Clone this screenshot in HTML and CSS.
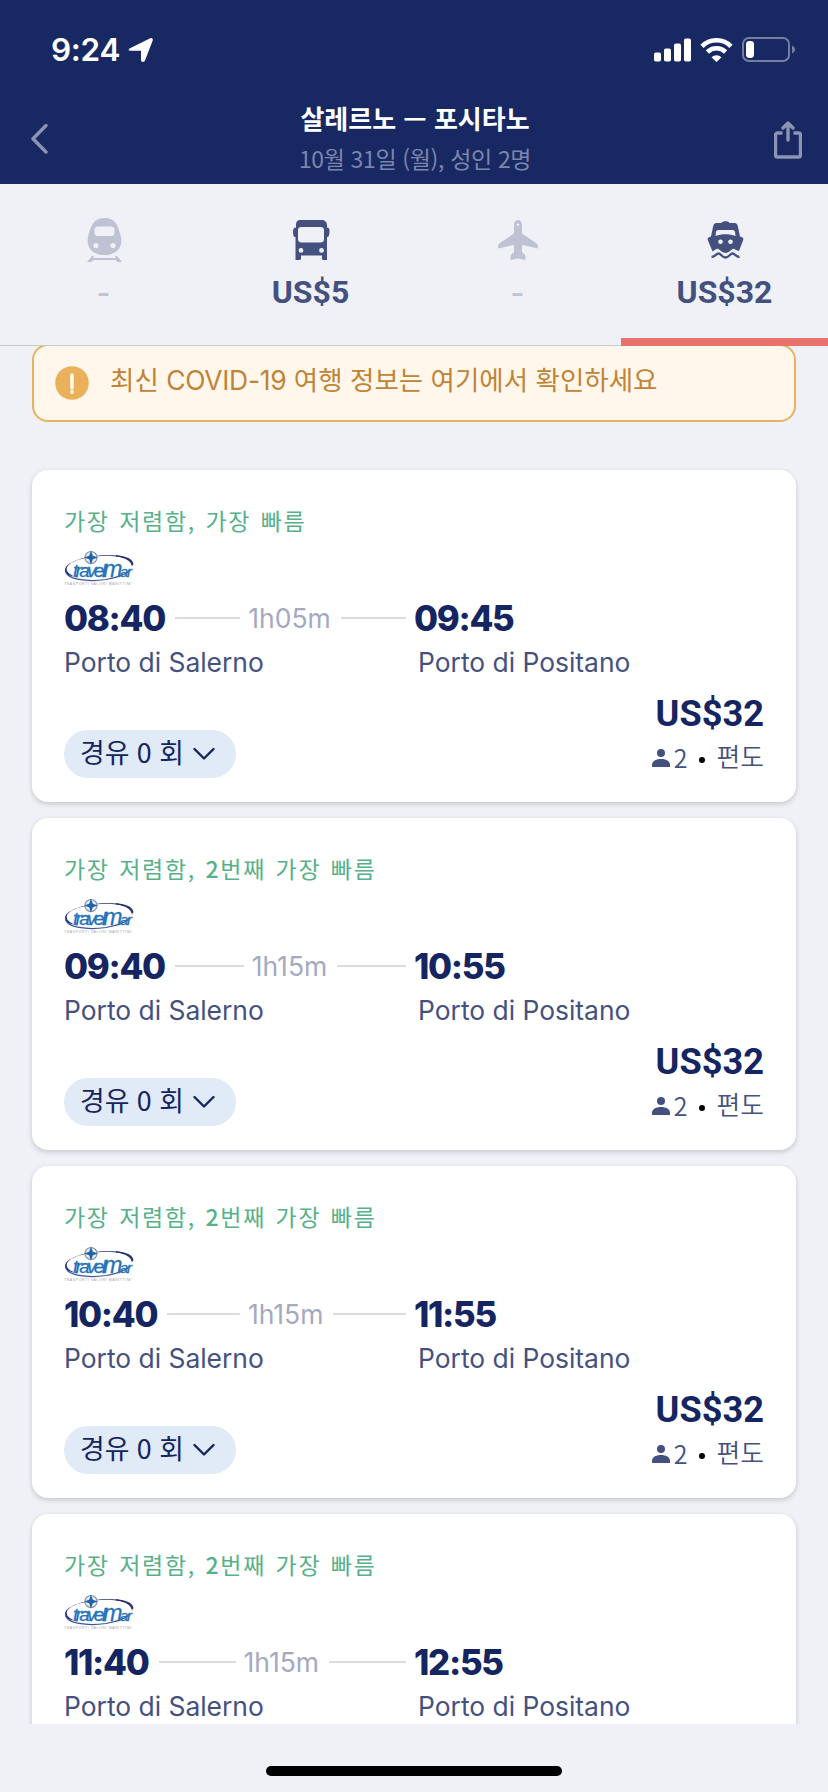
FILE: index.html
```html
<!DOCTYPE html>
<html lang="ko">
<head>
<meta charset="utf-8">
<title>살레르노 — 포시타노</title>
<link rel="stylesheet" href="styles.css">
</head>
<body>
<svg class="defs" aria-hidden="true">
  <symbol id="logo" viewBox="0 0 72 36">
    <path d="M12 27C-3 22 0 12 22 8C44 3 68 6 68 17C71 10 60 4.500 42 5C18 6 1 13 1 20C1 24 5 26 12 27Z" fill="#2a3479"/>
    <path d="M1.500 20C1.500 30 24 32 42 29.500C54 27.500 62 24 66 20" fill="none" stroke="#3b5596" stroke-width="1.200"/>
    <path d="M52 5.800C62 7 69 10 68.500 15" fill="none" stroke="#252f70" stroke-width="1.600"/>
    <circle cx="27" cy="7.500" r="6" fill="#e9edf5" stroke="#8b93ad" stroke-width="1.200"/>
    <path d="M27 .5l1.800 5.200 5.200 1.800-5.200 1.800L27 15l-1.800-5.700-5.200-1.800 5.200-1.800z" fill="#1e63a8"/>
  </symbol>
  <symbol id="person" viewBox="0 0 18 18">
    <circle cx="9" cy="4" r="4"/><path d="M0 18v-2c0-4 4-6 9-6s9 2 9 6v2z"/>
  </symbol>
  <symbol id="chev" viewBox="0 0 22 14">
    <path d="M1.500 2L11 11.500 20.500 2" fill="none" stroke="#152561" stroke-width="2.400" stroke-linecap="round" stroke-linejoin="round"/>
  </symbol>
</svg>
<div class="screen">
  <header class="header">
    <div class="status">
      <div class="clock"><span>9:24</span>
        <svg width="26" height="26" viewBox="0 0 26 26"><path d="M2 11.300L22.200 1.200c1.700-.8 3.100.6 2.500 2.200L17 23.500c-.9 2.200-4 1.800-4-.5V13.800H2.900c-2.500 0-3-1.600-.9-2.500z" fill="#fff"/></svg>
      </div>
      <div class="indicators">
        <svg width="37" height="24" viewBox="0 0 37 24" fill="#fff"><rect y="14.500" width="7" height="9" rx="1.800"/><rect x="10" y="10.500" width="7" height="13" rx="1.800"/><rect x="20" y="5.500" width="7" height="18" rx="1.800"/><rect x="30" y=".5" width="7" height="23" rx="1.800"/></svg>
        <svg width="33" height="24" viewBox="0 0 33 24"><g fill="none" stroke="#fff" stroke-width="4.600"><path d="M2 8.300a20.500 20.500 0 0 1 29 0"/><path d="M7.400 14a13 13 0 0 1 18.200 0"/></g><path d="M11.500 19.300a7.400 7.400 0 0 1 10 0L16.500 24z" fill="#fff"/></svg>
        <svg width="54" height="26" viewBox="0 0 54 26"><rect x="1" y="1" width="46" height="23" rx="6" fill="none" stroke="#747ea3" stroke-width="2"/><rect x="4" y="4" width="8" height="17" rx="3.400" fill="#fff"/><path d="M50 8.500c4 1.500 4 6.500 0 8z" fill="#747ea3"/></svg>
      </div>
    </div>
    <div class="nav">
      <svg width="18" height="32" viewBox="0 0 18 32"><path d="M16 2.500L3 15.800 16 29" fill="none" stroke="#8b94b2" stroke-width="3.400" stroke-linecap="round" stroke-linejoin="round"/></svg>
      <div class="heading"><h1>살레르노 — 포시타노</h1><p>10월 31일 (월), 성인 2명</p></div>
      <svg class="share" width="28" height="38" viewBox="0 0 28 38" fill="none" stroke="#8b94b2" stroke-width="3.400" stroke-linecap="round" stroke-linejoin="round"><path d="M8.500 12H3.500a2 2 0 0 0-2 2v20a2 2 0 0 0 2 2h21a2 2 0 0 0 2-2V14a2 2 0 0 0-2-2h-5" stroke-linecap="butt"/><path d="M14 19V3M9 7L14 2l5 5"/></svg>
    </div>
  </header>
  <nav class="tabs">
    <div class="tab off">
      <svg viewBox="0 0 44 44"><path fill-rule="evenodd" d="M22.500 0C12 0 9 7 6.300 18C3.500 29 10 37 22.500 37S41.500 29 38.700 18C36 7 33 0 22.500 0zM16 8.500h13a3.500 3.500 0 0 1 3.500 3.500v2.500a3.500 3.500 0 0 1-3.500 3.500H16a3.500 3.500 0 0 1-3.500-3.500V12A3.500 3.500 0 0 1 16 8.500zM14 25a2.600 2.600 0 1 1 0 5.200a2.600 2.600 0 0 1 0-5.200zm17 0a2.600 2.600 0 1 1 0 5.200a2.600 2.600 0 0 1 0-5.200z"/><path d="M12 38l-1 2h23l-1-2h2l5 6h-4.500l-2-2H11.500l-2 2H5l5-6z"/></svg>
      <span class="dash">-</span>
    </div>
    <div class="tab">
      <svg viewBox="0 0 44 44"><path fill-rule="evenodd" d="M11 2h22c3 0 5 2.500 5 5v2.500c3 0 2.700 3 2.300 6.500-.2 2.500-1.300 3-2.300 3V42h-3.500c-1 0-1.500-.6-1.500-1.500V37.500H12v3c0 .9-.5 1.500-1.500 1.500H6.500V19c-1 0-2.200-.5-2.300-3C3.800 12.500 4 9.500 7 9.500L7 7c0-2.500 1-5 4-5zM12.500 9C10 9 9 10 9 12v9c0 2 1 3.500 3.500 3.500h19c2.500 0 3.500-1.500 3.500-3.500v-9c0-2-1-3-3.500-3zM12 30a2.400 2.400 0 1 0 0 4.800a2.400 2.400 0 0 0 0-4.800zm20.500 0a2.400 2.400 0 1 0 0 4.800a2.400 2.400 0 0 0 0-4.800z"/></svg>
      <span class="fare">US$5</span>
    </div>
    <div class="tab off">
      <svg viewBox="0 0 44 44"><path fill-rule="evenodd" d="M22 2c2.500 0 4 2 4 5v8.500L40 25c1.500 1 2 2 2 5.500l-15-3.500c-1 0-1 .5-1 2v5c0 1 3.500 2 3.500 4.500V42c-2-.3-4.500-1.500-7.500-1.500s-5.500 1.200-7.500 1.500v-3.500c0-2.500 3.500-3.500 3.500-4.500v-5c0-1.500 0-2-1-2L2 30.500C2 27 2.500 26 4 25l14-9.500V7c0-3 1.500-5 4-5zm0 3.500c-1 0-1.600.8-1.600 2h3.200c0-1.200-.6-2-1.600-2z"/></svg>
      <span class="dash">-</span>
    </div>
    <div class="tab active">
      <svg viewBox="0 0 44 44"><path fill-rule="evenodd" d="M18.500 5c1-2.500 7-2.500 8 0h5c2 0 3 1.500 3.400 3.500L37 18.500l2.500 1c1 .5 1 1.500.5 3l-4 10.500C33 33 31 30 29.500 31c-2 1.200-4 4-7 4s-5-2.800-7-4c-1.500-1-3.500 1-6 2.500L5 22.500c-.5-1.500-.5-2.500.5-3l2.500-1 2.100-10C10.500 6.500 11.500 5 13.500 5zM15.500 12c-1.700 0-2.200.7-2.500 2l-.5 4c6-2.300 14-2.300 20 0L32 14c-.3-1.300-.8-2-2.500-2zM17.500 21.500a2.300 2.300 0 1 0 0 4.600a2.300 2.300 0 0 0 0-4.600zm10 0a2.300 2.300 0 1 0 0 4.600a2.300 2.300 0 0 0 0-4.600z"/><path d="M8.500 39c4 0 4.500-3.500 7-3.500s3.500 4 7 4 4.500-4 7-4 3 3.500 7 3.500" fill="none" stroke="#44517f" stroke-width="2.300"/></svg>
      <span class="fare">US$32</span>
    </div>
  </nav>
  <main class="list">
    <div class="notice">
      <svg width="34" height="34" viewBox="0 0 34 34"><circle cx="17" cy="17" r="16.800" fill="#ebb15a"/><path d="M17 9v13" stroke="#fff7ea" stroke-width="3.600" stroke-linecap="round"/><circle cx="17" cy="26" r="1.900" fill="#fff7ea"/></svg>
      <span>최신 <b>COVID-19</b> 여행 정보는 여기에서 확인하세요</span>
    </div>
    <article class="card">
      <div class="label">가장 저렴함, 가장 빠름</div>
      <svg class="logo" viewBox="0 0 72 36"><use href="#logo"/><text x="9" y="26.500" class="logo-name">travel<tspan class="logo-m">m</tspan><tspan class="logo-ar">ar</tspan></text><text x="0" y="35" class="logo-tag">TRASPORTI VALORI MARITTIMI</text></svg>
      <div class="route"><div class="leg"><span class="time">08:40</span><i></i><span class="dur">1h05m</span><i></i></div><span class="time">09:45</span></div>
      <div class="ports"><span>Porto di Salerno</span><span>Porto di Positano</span></div>
      <div class="foot"><div class="pill"><span>경유 0 회</span><svg width="22" height="14"><use href="#chev"/></svg></div>
        <div class="price"><strong>US$32</strong><div class="pax"><svg width="18" height="18"><use href="#person"/></svg><span class="count">2</span><i></i><span>편도</span></div></div></div>
    </article>
    <article class="card">
      <div class="label">가장 저렴함, <b>2</b>번째 가장 빠름</div>
      <svg class="logo" viewBox="0 0 72 36"><use href="#logo"/><text x="9" y="26.500" class="logo-name">travel<tspan class="logo-m">m</tspan><tspan class="logo-ar">ar</tspan></text><text x="0" y="35" class="logo-tag">TRASPORTI VALORI MARITTIMI</text></svg>
      <div class="route"><div class="leg"><span class="time">09:40</span><i></i><span class="dur">1h15m</span><i></i></div><span class="time">10:55</span></div>
      <div class="ports"><span>Porto di Salerno</span><span>Porto di Positano</span></div>
      <div class="foot"><div class="pill"><span>경유 0 회</span><svg width="22" height="14"><use href="#chev"/></svg></div>
        <div class="price"><strong>US$32</strong><div class="pax"><svg width="18" height="18"><use href="#person"/></svg><span class="count">2</span><i></i><span>편도</span></div></div></div>
    </article>
    <article class="card">
      <div class="label">가장 저렴함, <b>2</b>번째 가장 빠름</div>
      <svg class="logo" viewBox="0 0 72 36"><use href="#logo"/><text x="9" y="26.500" class="logo-name">travel<tspan class="logo-m">m</tspan><tspan class="logo-ar">ar</tspan></text><text x="0" y="35" class="logo-tag">TRASPORTI VALORI MARITTIMI</text></svg>
      <div class="route"><div class="leg"><span class="time">10:40</span><i></i><span class="dur">1h15m</span><i></i></div><span class="time">11:55</span></div>
      <div class="ports"><span>Porto di Salerno</span><span>Porto di Positano</span></div>
      <div class="foot"><div class="pill"><span>경유 0 회</span><svg width="22" height="14"><use href="#chev"/></svg></div>
        <div class="price"><strong>US$32</strong><div class="pax"><svg width="18" height="18"><use href="#person"/></svg><span class="count">2</span><i></i><span>편도</span></div></div></div>
    </article>
    <article class="card">
      <div class="label">가장 저렴함, <b>2</b>번째 가장 빠름</div>
      <svg class="logo" viewBox="0 0 72 36"><use href="#logo"/><text x="9" y="26.500" class="logo-name">travel<tspan class="logo-m">m</tspan><tspan class="logo-ar">ar</tspan></text><text x="0" y="35" class="logo-tag">TRASPORTI VALORI MARITTIMI</text></svg>
      <div class="route"><div class="leg"><span class="time">11:40</span><i></i><span class="dur">1h15m</span><i></i></div><span class="time">12:55</span></div>
      <div class="ports"><span>Porto di Salerno</span><span>Porto di Positano</span></div>
    </article>
  </main>
  <footer class="home"><div class="home-bar"></div></footer>
</div>
</body>
</html>
```
FILE: styles.css
```css
* { box-sizing: border-box; margin: 0; padding: 0; }
body { background: #f0f1f6; font-family: Inter, "Noto Sans CJK KR", sans-serif; white-space: nowrap; }
svg { display: block; flex: none; }
.defs { position: absolute; width: 0; height: 0; }
.screen { width: 828px; height: 1792px; display: flex; flex-direction: column; overflow: hidden; }

.header { height: 184px; flex: none; background: #182863; color: #fff; }
.status { height: 94px; padding: 5px 32px 0 51px; display: flex; align-items: center; justify-content: space-between; }
.clock { display: flex; align-items: center; gap: 8px; font-size: 31.500px; letter-spacing: -.3px; font-weight: 600; line-height: 40px; }
.indicators { display: flex; align-items: center; gap: 9px; }
.nav { height: 90px; padding: 0 26px 0 30px; display: flex; justify-content: space-between; }
.nav > svg { margin-top: 29px; }
.nav > svg:first-child { margin-right: 8px; }
.nav > .share { margin-top: 27px; }
.heading { text-align: center; padding-top: 7px; font-family: "Noto Sans CJK KR", sans-serif; }
.heading h1 { font-size: 26px; line-height: 34px; font-weight: 700; }
.heading p { font-size: 23px; line-height: 34px; padding-top: 6px; color: #7c86ab; font-weight: 400; letter-spacing: -.35px; }

.tabs { height: 162px; flex: none; display: flex; border-bottom: 1px solid #c9cace; position: relative; }
.tab { flex: 1; padding-top: 34px; display: flex; flex-direction: column; align-items: center; color: #44517f; fill: #44517f; }
.tab.off { color: #bec2d3; fill: #bec2d3; }
.tab svg { width: 44px; height: 44px; }
.fare { font: 700 32px/40px Roboto, sans-serif; margin-top: 10px; }
.dash { font: 500 30px/40px Inter, sans-serif; margin-top: 11px; }
.tab.active::after { content: ""; position: absolute; right: 0; bottom: -1px; width: 207px; height: 8px; background: #e8736d; }

.list { flex: 1; overflow: hidden; padding: 0 32px; display: flex; flex-direction: column; }
.notice { flex: none; height: 78px; margin-top: -2px; margin-bottom: 48px; border: 2px solid #e6b163; border-radius: 16px; background: #fff7ec; color: #bf8435; display: flex; align-items: center; padding: 0 21px; gap: 20px; font: 26.500px/36px "Noto Sans CJK KR", sans-serif; }
.notice span { padding-bottom: 8px; margin-left: 1px; }
.notice b { font: 400 26.500px/30px Inter, sans-serif; letter-spacing: -.3px; }
.card { flex: none; height: 332px; margin-bottom: 16px; padding: 33px 32px 0; border-radius: 16px; background: #fff; box-shadow: 0 2px 5px rgba(40, 45, 70, .22); }
.label { font: 400 23px/34px "Noto Sans CJK KR", sans-serif; letter-spacing: 1.700px; word-spacing: 1.400px; color: #56b188; }
.label b { font-weight: 500; }
.logo { width: 72px; height: 36px; margin-top: 13px; }
.logo-name { font: italic 400 19px "Liberation Sans", sans-serif; letter-spacing: -2.700px; fill: #2672b8; stroke: #2672b8; stroke-width: .3px; }
.logo-m { font-size: 23px; letter-spacing: -2.500px; }
.logo-ar { font-size: 15px; letter-spacing: -1.200px; }
.logo-tag { font: 3.500px "Liberation Sans", sans-serif; letter-spacing: .6px; fill: #9aa1b8; }
.route { display: flex; align-items: center; height: 44px; margin-top: 10px; }
.leg { width: 350px; display: flex; align-items: center; }
.leg i { flex: 1; height: 2px; background: #dbdde6; margin: 0 8px 0 10px; }
.time { font-size: 34.800px; line-height: 44px; font-weight: 800; color: #152561; letter-spacing: -1.300px; }
.dur { font-size: 26.500px; color: #a5a9c0; }
.ports { display: flex; margin-top: 2px; font-size: 26.400px; line-height: 40px; color: #44517f; }
.ports span:first-child { width: 354px; }
.foot { display: flex; justify-content: space-between; height: 104px; align-items: flex-end; }
.pill { height: 48px; width: 172px; border-radius: 24px; background: #e1eaf7; color: #152561; display: flex; align-items: center; padding-left: 16px; gap: 9px; font: 400 26.800px/40px "Noto Sans CJK KR", sans-serif; margin-bottom: 8px; }
.pill span { padding-bottom: 5px; }
.price { text-align: right; padding-bottom: 7px; }
.price strong { display: block; font: 700 36.200px/42px Roboto, sans-serif; color: #152561; }
.pax { display: flex; align-items: center; justify-content: flex-end; height: 44px; fill: #44517f; color: #44517f; font: 350 25.800px/40px "Noto Sans CJK KR", sans-serif; }
.pax svg { margin-top: 2px; }
.pax > span:last-child { padding-bottom: 3px; }
.count { margin-left: 4px; font-size: 25px; }
.pax i { width: 6px; height: 6px; border-radius: 50%; background: #000; margin: 5px 12px 0 11px; }
.home { height: 68px; flex: none; display: flex; justify-content: center; padding-top: 42px; }
.home-bar { width: 296px; height: 10px; border-radius: 5px; background: #000; }
```
